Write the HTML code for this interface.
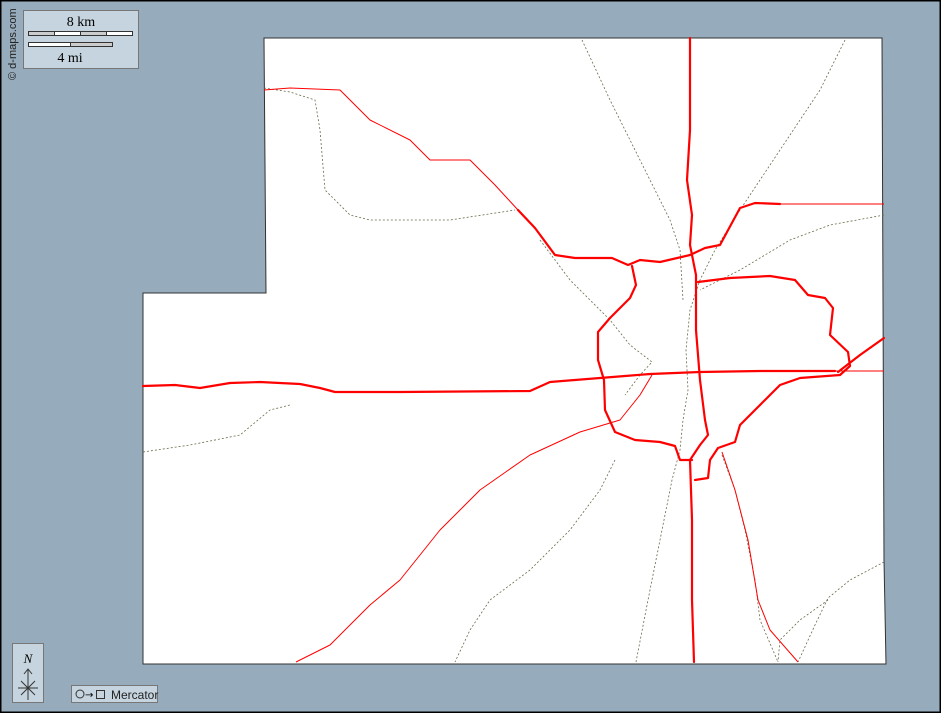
<!DOCTYPE html>
<html><head><style>
html,body{margin:0;padding:0;background:#96abbb;}
svg{display:block}
</style></head><body>
<svg width="941" height="713" viewBox="0 0 941 713" xmlns="http://www.w3.org/2000/svg">
<rect x="0.5" y="0.5" width="940" height="712" fill="#96abbb" stroke="#000" stroke-width="2"/>
<path d="M264,38 L882,38 L883,300 L884,560 L886,664 L143,664 L143,293 L266,293 L265,165 Z" fill="#fff" stroke="#333" stroke-width="1"/>
<g fill="none" stroke="#6a6a4a" stroke-width="0.8" stroke-dasharray="2,2" stroke-linejoin="round">
<path d="M264,88 L290,92 L315,100 L320,130 L325,190 L350,215 L370,220 L450,220 L515,210"/>
<path d="M582,40 L610,100 L640,160 L670,220 L680,250 L683,300"/>
<path d="M845,40 L820,90 L780,150 L740,210 L715,250 L700,280 L690,310 L686,350 L688,390 L683,420 L680,450 L672,480 L660,540 L648,600 L636,662"/>
<path d="M884,215 L830,225 L790,240 L740,270 L700,290"/>
<path d="M540,240 L570,280 L610,320 L630,345 L652,362 L640,375 L625,395"/>
<path d="M143,452 L190,445 L240,435 L270,410 L290,405"/>
<path d="M615,460 L600,490 L570,530 L530,570 L490,600 L470,630 L455,662"/>
<path d="M884,562 L850,580 L828,598 L815,625 L798,662"/>
<path d="M828,600 L800,620 L780,640 L778,662"/>
<path d="M722,455 L735,490 L745,530 L755,580 L760,620 L778,662"/>
</g>
<g fill="none" stroke="#f00" stroke-width="1" stroke-linejoin="round">
<path d="M264,90 L290,88 L340,90 L370,120 L410,140 L430,160 L470,160 L495,185 L518,210"/>
<path d="M652,375 L640,395 L620,420 L580,432 L530,455 L480,490 L440,530 L400,580 L370,605 L330,645 L296,662"/>
<path d="M780,204 L884,204"/>
<path d="M835,371 L884,371"/>
<path d="M722,452 L735,490 L748,540 L758,600 L770,630 L798,662"/>
</g>
<g fill="none" stroke="#f00" stroke-width="2.2" stroke-linejoin="round" stroke-linecap="round">
<path d="M518,210 L535,228 L555,255 L575,258 L612,258 L628,265 L640,260 L660,262 L690,255 L705,248 L720,245 L740,208 L755,203 L780,204"/>
<path d="M690,38 L690,130 L687,180 L692,215 L690,245 L696,275 L696,330 L700,380 L705,420 L708,435 L700,445 L690,460 L692,520 L692,600 L694,662"/>
<path d="M143,386 L175,385 L200,388 L230,383 L260,382 L300,384 L320,388 L335,392 L400,392 L530,391 L550,382 L600,378 L650,374 L700,372 L760,371 L835,371"/>
<path d="M632,266 L636,285 L630,298 L610,318 L598,332 L598,360 L604,380 L605,410 L615,432 L635,440 L660,442 L675,446 L680,460 L692,460"/>
<path d="M698,282 L730,278 L770,276 L795,280 L808,295 L825,298 L833,308 L830,335 L848,352 L850,366 L840,375 L800,378 L780,385 L760,405 L740,425 L735,442 L718,448 L710,460 L708,478 L695,480"/>
<path d="M838,372 L860,355 L884,338"/>
</g>
<rect x="23.5" y="10.5" width="115" height="58" fill="#c5d4de" stroke="#777"/>
<text x="81" y="26" font-family="Liberation Serif, serif" font-size="14" text-anchor="middle">8 km</text>
<rect x="28.5" y="31.5" width="104" height="4" fill="#fff" stroke="#333" stroke-width="1"/>
<rect x="28.5" y="31.5" width="26" height="4" fill="#ccc" stroke="#333" stroke-width="1"/>
<rect x="80.5" y="31.5" width="26" height="4" fill="#ccc" stroke="#333" stroke-width="1"/>
<rect x="28.5" y="42.5" width="84" height="4" fill="#ccc" stroke="#333" stroke-width="1"/>
<rect x="28.5" y="42.5" width="42" height="4" fill="#fff" stroke="#333" stroke-width="1"/>
<text x="70" y="62" font-family="Liberation Serif, serif" font-size="14" text-anchor="middle">4 mi</text>
<text transform="translate(16,80) rotate(-90)" font-family="Liberation Sans, sans-serif" font-size="11" fill="#222">© d-maps.com</text>
<rect x="12.5" y="643.5" width="31" height="59" fill="#c5d4de" stroke="#777"/>
<text x="28" y="663" font-family="Liberation Serif, serif" font-style="italic" font-size="13" text-anchor="middle">N</text>
<path d="M28,670 L28,700 M24,674 L28,669 L32,674 M18,688 L38,688 M21,681 L35,695 M35,681 L21,695" stroke="#333" stroke-width="1" fill="none"/>
<rect x="71.5" y="685.5" width="86" height="17" fill="#c5d4de" stroke="#777"/>
<circle cx="80" cy="694" r="4" fill="none" stroke="#333"/>
<text x="85" y="698" font-family="DejaVu Sans, sans-serif" font-size="10">→</text>
<rect x="96.5" y="690.5" width="8" height="8" fill="none" stroke="#333"/>
<text x="111" y="699" font-family="Liberation Sans, sans-serif" font-size="12" fill="#222">Mercator</text>
</svg>
</body></html>
